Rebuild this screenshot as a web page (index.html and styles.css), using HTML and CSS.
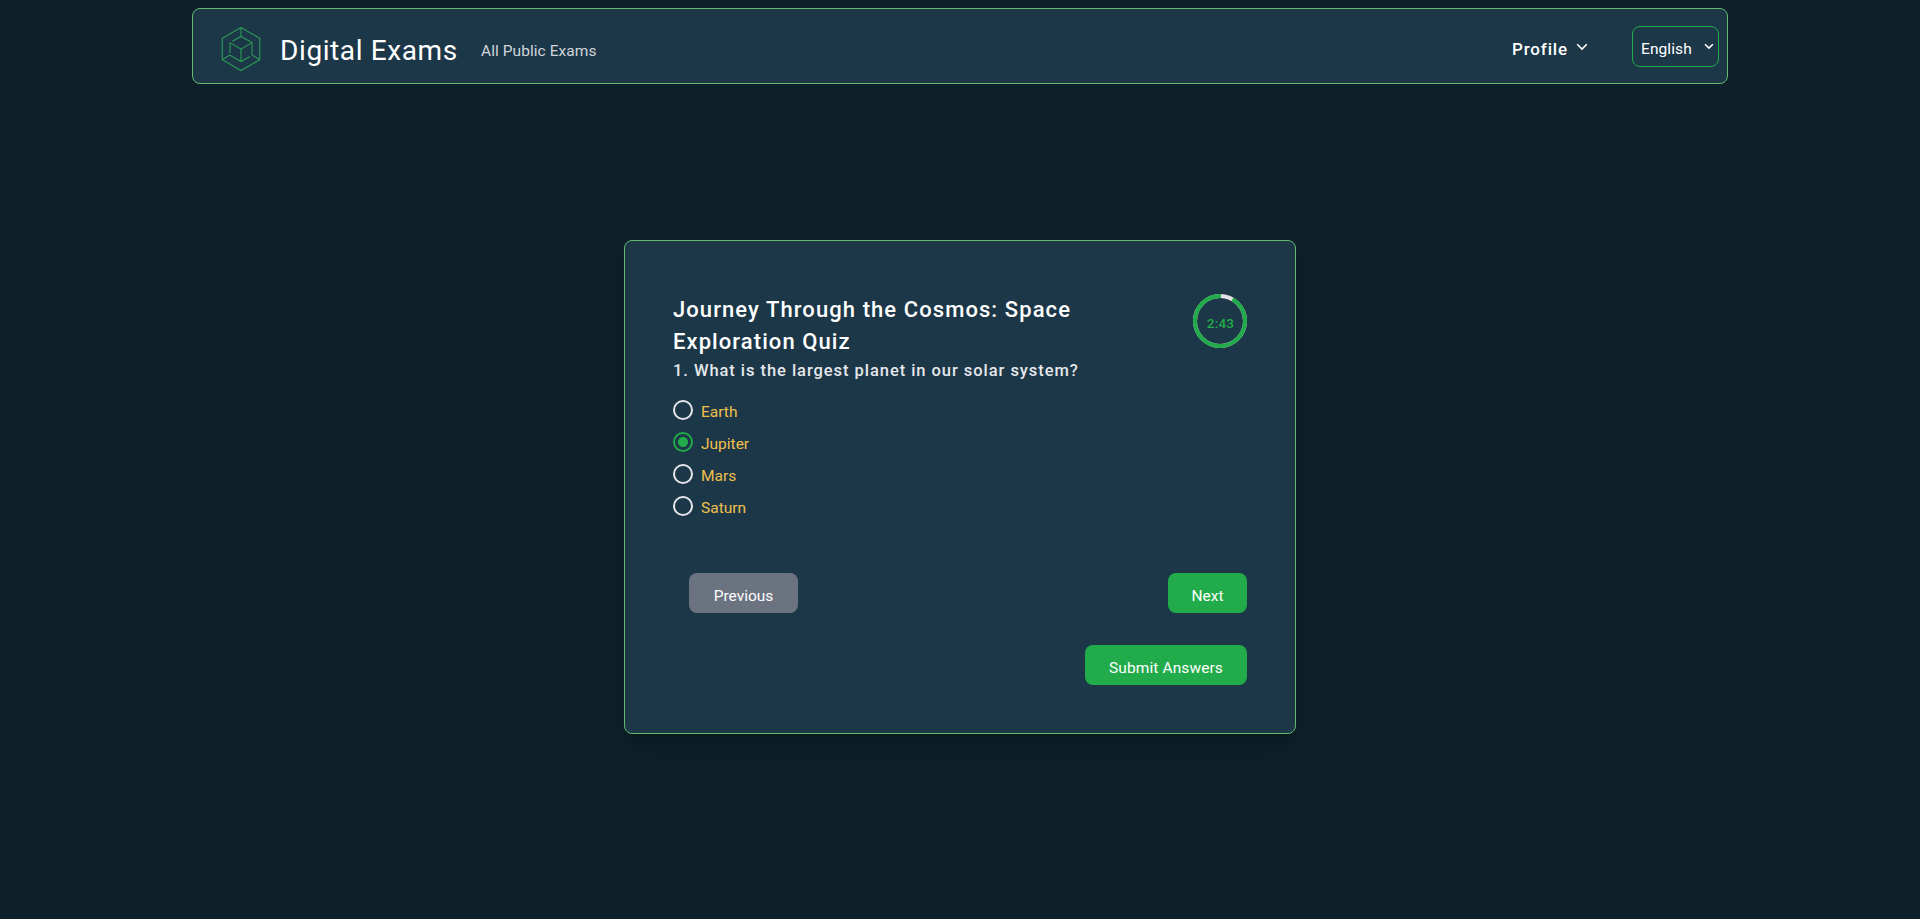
FILE: index.html
```html
<!DOCTYPE html>
<html lang="en">
<head>
<meta charset="utf-8">
<title>Digital Exams</title>
<link rel="stylesheet" href="styles.css">
</head>
<body>
<header class="navbar">
  <svg class="logo" viewBox="0 0 40 46" width="40" height="46">
    <path d="M20 1.5 38.7 12.3V33.7L20 44.5 1.3 33.7V12.3ZM20 1.5V10.5M11.3 15.3 20 10.5 31 16.6V29L38.7 33.7M1.3 33.7 9 29M9 27V16.6L20 23.2 31 16.6M20 23.2V35.5M9 29.3 20 35.5 29 30.5"/>
  </svg>
  <span class="brand">Digital Exams</span>
  <a class="nav-link">All Public Exams</a>
  <div class="nav-right">
    <button class="profile"><span>Profile</span><svg viewBox="0 0 12 8" width="12" height="8"><path d="M1.2 1.2 6 6 10.8 1.2"/></svg></button>
    <button class="language"><span>English</span><svg viewBox="0 0 10 7" width="10" height="7"><path d="M1 1.2 5 5.2 9 1.2"/></svg></button>
  </div>
</header>
<main class="stage">
  <section class="card">
    <div class="card-head">
      <h1 class="quiz-title">Journey Through the Cosmos: Space<br>Exploration Quiz</h1>
      <div class="timer">
        <svg viewBox="0 0 54 54" width="54" height="54">
          <circle class="track" cx="27" cy="27" r="25"/>
          <circle class="progress" cx="27" cy="27" r="25" pathLength="360" stroke-dasharray="332 28" transform="rotate(-60 27 27)"/>
        </svg>
        <span class="time">2:43</span>
      </div>
    </div>
    <h2 class="question">1. What is the largest planet in our solar system?</h2>
    <ul class="options">
      <li class="option"><i class="radio"></i><span>Earth</span></li>
      <li class="option"><i class="radio checked"></i><span>Jupiter</span></li>
      <li class="option"><i class="radio"></i><span>Mars</span></li>
      <li class="option"><i class="radio"></i><span>Saturn</span></li>
    </ul>
    <div class="pager">
      <button class="btn previous">Previous</button>
      <button class="btn next">Next</button>
    </div>
    <div class="actions"><button class="btn submit">Submit Answers</button></div>
  </section>
</main>
</body>
</html>
```

FILE: styles.css
```css
* { box-sizing: border-box; }
body {
  margin: 0;
  height: 919px;
  padding-top: 8px;
  overflow: hidden;
  background: #0d1f28;
  color: #fff;
  font-family: Roboto, "Liberation Sans", sans-serif;
}
button { font: inherit; color: inherit; background: none; border: 0; padding: 0; }
.navbar {
  width: 1536px;
  height: 76px;
  margin: 0 auto;
  padding: 0 8px 0 28px;
  display: flex;
  align-items: center;
  background: #1c3748;
  border: 1px solid #66bb6a;
  border-radius: 8px;
}
.logo { margin-top: 6px; fill: none; stroke: #2b9a55; stroke-width: 1.1; }
.brand { margin: 10px 0 0 19px; width: 201px; font-size: 28px; line-height: 36px; letter-spacing: .6px; }
.nav-link { margin-top: 10px; font-size: 15.5px; line-height: 24px; letter-spacing: .06px; color: #d1d5db; }
.nav-right { margin-left: auto; display: flex; align-items: center; }
.profile { display: flex; align-items: center; width: 120px; margin-top: 5px; font-size: 17px; font-weight: 500; line-height: 24px; letter-spacing: .85px; }
.profile span { width: 64px; text-align: left; }
.profile svg, .language svg { margin-top: -4px; fill: none; stroke: #fff; stroke-width: 1.6; }
.language {
  display: flex;
  align-items: center;
  width: 87px;
  height: 41px;
  padding: 4px 4px 0 8px;
  border: 1px solid #22ab4a;
  border-radius: 8px;
  font-size: 15.5px;
  letter-spacing: .1px;
}
.language span { width: 64px; padding-top: 1px; text-align: left; }
.stage { padding-top: 156px; }
.card {
  width: 672px;
  height: 494px;
  margin: 0 auto;
  padding: 51px 48px 0 48px;
  background: #1c3748;
  border: 1px solid #66bb6a;
  border-radius: 8px;
  box-shadow: 0 20px 25px -5px rgba(0, 0, 0, .1), 0 8px 10px -6px rgba(0, 0, 0, .1);
}
.card-head { display: flex; justify-content: space-between; height: 67px; }
.quiz-title { margin: 2px 0 0; font-size: 22px; font-weight: 500; line-height: 32px; letter-spacing: 1.08px; white-space: nowrap; }
.timer { display: grid; width: 54px; height: 54px; margin-top: 2px; place-items: center; }
.timer > * { grid-area: 1 / 1; }
.timer circle { fill: none; stroke-width: 4; }
.timer .track { stroke: #e5e0e5; }
.timer .progress { stroke: #22ab4a; }
.time { padding: 4px 0 0 1px; font-size: 13.5px; font-weight: 500; letter-spacing: .2px; color: #22ab4a; }
.question { margin: 0; font-size: 16.5px; font-weight: 500; line-height: 24px; color: #e5e7eb; letter-spacing: .95px; white-space: nowrap; }
.options { margin: 11px 0 0; padding: 0; list-style: none; }
.option { display: flex; align-items: center; height: 32px; font-size: 15.5px; color: #f0c04c; }
.option span { margin: 4px 0 0 8px; }
.radio { width: 20px; height: 20px; margin-top: -1px; border: 2px solid #e5e7eb; border-radius: 50%; }
.radio.checked { border-color: #22ab4a; background: radial-gradient(circle, #22ab4a 4.7px, transparent 5.3px); }
.pager { display: flex; justify-content: space-between; margin-top: 51px; padding-left: 16px; }
.actions { display: flex; justify-content: flex-end; margin-top: 32px; }
.btn { height: 40px; padding-top: 5px; border-radius: 8px; background: #22ab4a; font-size: 15.5px; }
.previous { width: 109px; background: #6b7280; }
.next { width: 79px; }
.submit { width: 162px; letter-spacing: .1px; }
```
